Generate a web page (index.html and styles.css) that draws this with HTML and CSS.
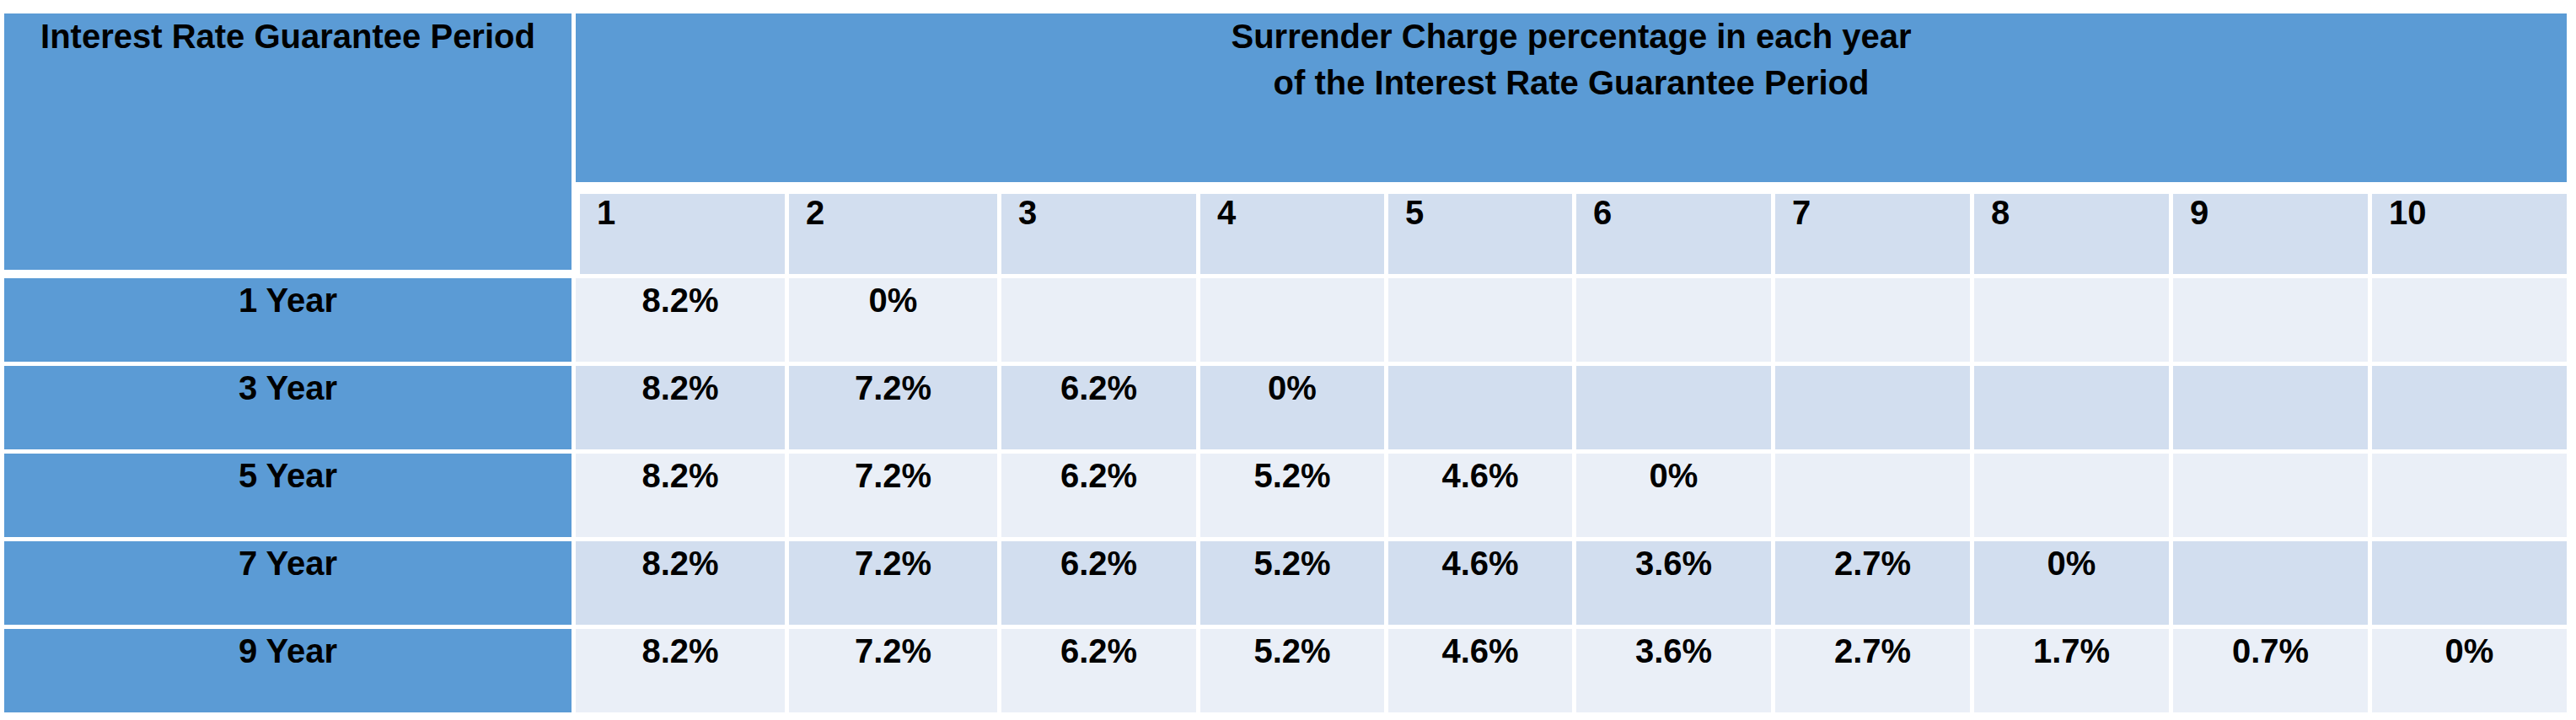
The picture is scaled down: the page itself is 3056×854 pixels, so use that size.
FILE: index.html
```html
<!DOCTYPE html>
<html lang="en">
<head>
<meta charset="utf-8">
<title>Surrender Charge Schedule</title>
<link rel="stylesheet" href="styles.css">
</head>
<body>
<div class="grid">
  <div class="corner">Interest Rate Guarantee Period</div>
  <div class="title">Surrender Charge percentage in each year<br>of the Interest Rate Guarantee Period</div>
  <div class="num first">1</div>
  <div class="num">2</div>
  <div class="num">3</div>
  <div class="num">4</div>
  <div class="num">5</div>
  <div class="num">6</div>
  <div class="num">7</div>
  <div class="num">8</div>
  <div class="num">9</div>
  <div class="num">10</div>

  <div class="row light">
    <div class="label">1 Year</div>
    <div class="val">8.2%</div><div class="val">0%</div><div class="val"></div><div class="val"></div><div class="val"></div>
    <div class="val"></div><div class="val"></div><div class="val"></div><div class="val"></div><div class="val"></div>
  </div>
  <div class="row dark">
    <div class="label">3 Year</div>
    <div class="val">8.2%</div><div class="val">7.2%</div><div class="val">6.2%</div><div class="val">0%</div><div class="val"></div>
    <div class="val"></div><div class="val"></div><div class="val"></div><div class="val"></div><div class="val"></div>
  </div>
  <div class="row light">
    <div class="label">5 Year</div>
    <div class="val">8.2%</div><div class="val">7.2%</div><div class="val">6.2%</div><div class="val">5.2%</div><div class="val">4.6%</div>
    <div class="val">0%</div><div class="val"></div><div class="val"></div><div class="val"></div><div class="val"></div>
  </div>
  <div class="row dark">
    <div class="label">7 Year</div>
    <div class="val">8.2%</div><div class="val">7.2%</div><div class="val">6.2%</div><div class="val">5.2%</div><div class="val">4.6%</div>
    <div class="val">3.6%</div><div class="val">2.7%</div><div class="val">0%</div><div class="val"></div><div class="val"></div>
  </div>
  <div class="row light">
    <div class="label">9 Year</div>
    <div class="val">8.2%</div><div class="val">7.2%</div><div class="val">6.2%</div><div class="val">5.2%</div><div class="val">4.6%</div>
    <div class="val">3.6%</div><div class="val">2.7%</div><div class="val">1.7%</div><div class="val">0.7%</div><div class="val">0%</div>
  </div>
</div>
</body>
</html>
```

FILE: styles.css
```css
html, body {
  margin: 0;
  padding: 0;
  background: #ffffff;
}

body {
  font-family: "Liberation Sans", Arial, sans-serif;
  font-weight: bold;
  font-size: 40px;
  color: #000000;
}

.grid {
  display: grid;
  margin: 16px 0 0 5px;
  width: 3040px;
  grid-template-columns: 673px 248px 247px 231px 218px 218px 231px 231px 231px 231px 231px;
  grid-template-rows: 200px 104px repeat(5, 99px);
  gap: 5px;
}

.corner {
  grid-column: 1;
  grid-row: 1 / span 2;
  margin-bottom: 5px;
  background: #5b9bd5;
  text-align: center;
  line-height: 55px;
}

.title {
  grid-column: 2 / -1;
  grid-row: 1;
  background: #5b9bd5;
  text-align: center;
  line-height: 55px;
}

.num {
  grid-row: 2;
  margin-top: 9px;
  background: #d2deef;
  line-height: 45px;
  padding-left: 20px;
}

.num.first {
  margin-left: 5px;
}

.row {
  display: contents;
}

.label {
  background: #5b9bd5;
  text-align: center;
  line-height: 45px;
  padding-top: 4px;
}

.val {
  text-align: center;
  line-height: 45px;
  padding-top: 4px;
}

.light .val {
  background: #eaeff7;
}

.dark .val {
  background: #d2deef;
}
```
